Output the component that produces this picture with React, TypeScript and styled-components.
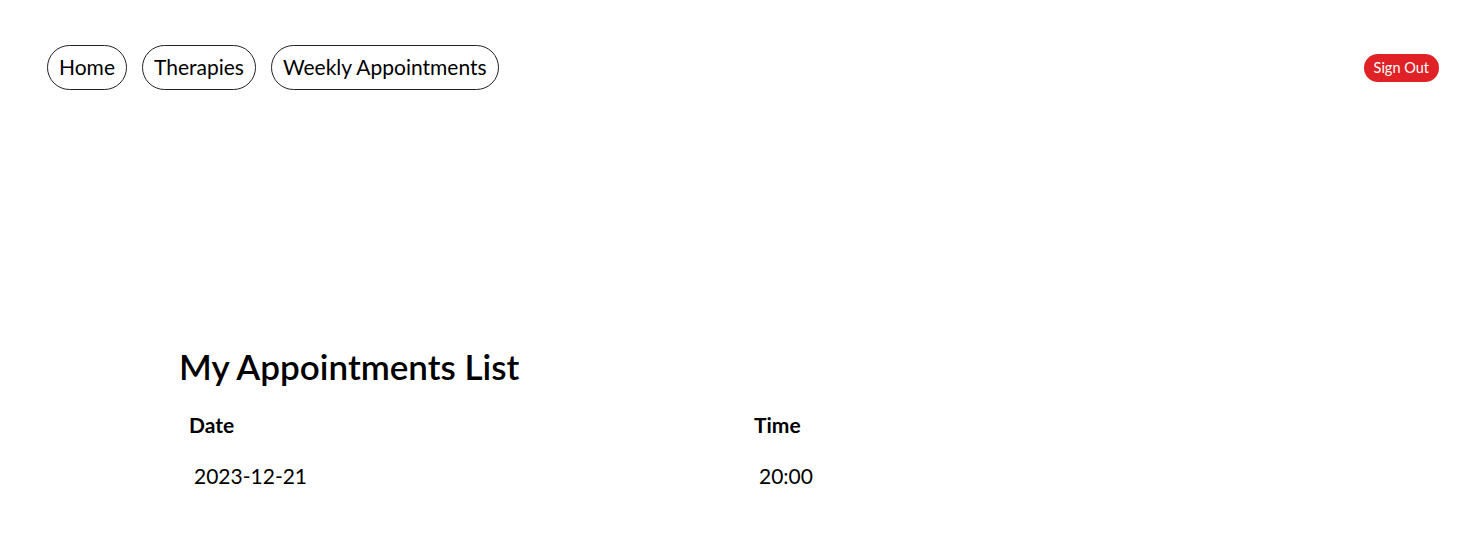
import React from 'react'
import styled, { createGlobalStyle } from 'styled-components'

const GlobalStyle = createGlobalStyle`
  html, body {
    margin: 0;
    padding: 0;
    background: #ffffff;
    font-family: Lato, "Noto Sans", sans-serif;
    color: #000000;
  }
`

const Page = styled.div`
  width: 1482px;
  min-height: 542px;
`

const NavBar = styled.nav`
  display: flex;
  align-items: center;
  justify-content: space-between;
  padding: 45px 43px 0 47px;
`

const NavLinks = styled.div`
  display: flex;
  gap: 15px;
`

const NavButton = styled.a`
  display: flex;
  align-items: center;
  height: 45px;
  box-sizing: border-box;
  padding: 0 11px 3px;
  border: 1px solid #222;
  border-radius: 23px;
  font-size: 21px;
  color: #000;
  text-decoration: none;
`

const SignOut = styled.button`
  height: 28px;
  padding: 0 10px 1px;
  border: none;
  border-radius: 14px;
  background: #e02125;
  color: #fff;
  font-family: inherit;
  font-size: 14.5px;
`

const Content = styled.section`
  padding: 256px 0 0 179px;
`

const Title = styled.h2`
  margin: 0 0 26px;
  font-size: 35px;
  font-weight: 600;
  line-height: 40px;
`

const Table = styled.table`
  border-collapse: collapse;
  font-size: 21px;
`

const Th = styled.th`
  width: 555px;
  padding: 0 0 20px 10px;
  text-align: left;
  font-weight: 700;
`

const Td = styled.td`
  padding: 6px 0 0 15px;
`

const nav = ['Home', 'Therapies', 'Weekly Appointments']
const appointments = [{ date: '2023-12-21', time: '20:00' }]

const App = () => (
  <Page>
    <GlobalStyle />
    <NavBar>
      <NavLinks>
        {nav.map((item) => (
          <NavButton key={item} href="#">
            {item}
          </NavButton>
        ))}
      </NavLinks>
      <SignOut>Sign Out</SignOut>
    </NavBar>
    <Content>
      <Title>My Appointments List</Title>
      <Table>
        <thead>
          <tr>
            <Th>Date</Th>
            <Th>Time</Th>
          </tr>
        </thead>
        <tbody>
          {appointments.map((a) => (
            <tr key={a.date + a.time}>
              <Td>{a.date}</Td>
              <Td>{a.time}</Td>
            </tr>
          ))}
        </tbody>
      </Table>
    </Content>
  </Page>
)

export default App
